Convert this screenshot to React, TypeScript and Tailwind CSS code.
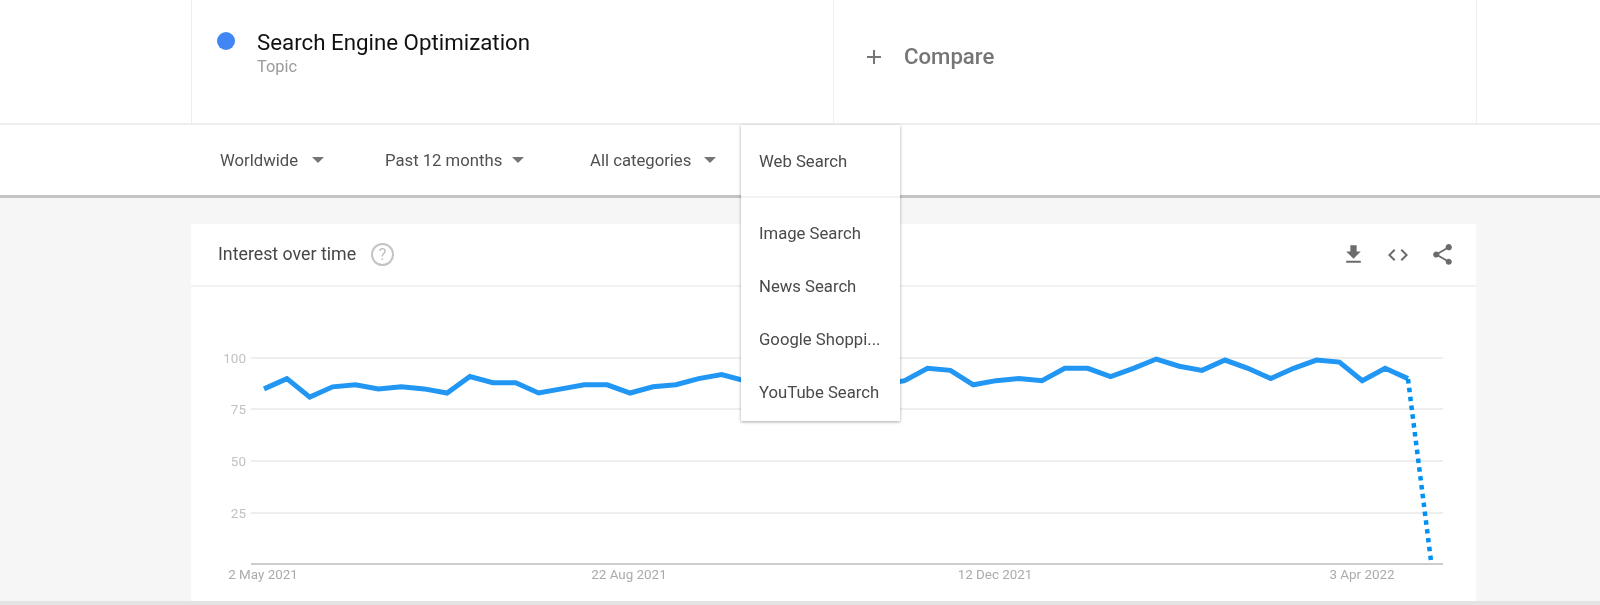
const values = [
  85, 90, 81, 86, 87, 85, 86, 85, 83, 91, 88, 88, 83, 85, 87, 87, 83, 86, 87, 90, 92, 89, 90, 88, 87, 88, 90, 87, 89, 95,
  94, 87, 89, 90, 89, 95, 95, 91, 95, 99.5, 96, 94, 99, 95, 90, 95, 99, 98, 89, 95, 90,
]

const X0 = 264
const STEP = 22.88
const toY = (v: number) => 564 - 2.06 * v
const solidLine = values.map((v, i) => `${X0 + i * STEP},${toY(v)}`).join(' ')

const gridLines = [
  { label: '100', y: 358 },
  { label: '75', y: 409 },
  { label: '50', y: 461 },
  { label: '25', y: 513 },
]

const dates = [
  { label: '2 May 2021', x: 263 },
  { label: '22 Aug 2021', x: 629 },
  { label: '12 Dec 2021', x: 995 },
  { label: '3 Apr 2022', x: 1362 },
]

function Caret({ className }: { className: string }) {
  return <span className={`h-0 w-0 border-x-[6px] border-t-[6px] border-x-transparent border-t-[#757575] ${className}`} />
}

function Filter({ label, className }: { label: string; className: string }) {
  return (
    <div className={`flex items-center ${className}`}>
      <span>{label}</span>
      <Caret className="mb-[2px]" />
    </div>
  )
}

function Chart() {
  return (
    <svg viewBox="191 287 1285 314" className="block h-[314px] w-[1285px]" style={{ fontFamily: 'Roboto, sans-serif' }}>
      {gridLines.map((g) => (
        <g key={g.label}>
          <line x1="251" x2="1443" y1={g.y} y2={g.y} stroke="#e8e8e8" strokeWidth="1.5" />
          <text x="246" y={g.y + 4.5} textAnchor="end" fontSize="13.5" fill="#c2c2c2">
            {g.label}
          </text>
        </g>
      ))}
      <line x1="251" x2="1443" y1="564" y2="564" stroke="#bdbdbd" strokeWidth="1.5" />
      {dates.map((d) => (
        <text key={d.label} x={d.x} y="579" textAnchor="middle" fontSize="13.4" fill="#ababab">
          {d.label}
        </text>
      ))}
      <polyline points={solidLine} fill="none" stroke="#2196f3" strokeWidth="5" />
      <line x1="1408" y1="379" x2="1431" y2="561" stroke="#0091f5" strokeWidth="4.5" strokeDasharray="4.5 4.4" />
    </svg>
  )
}

export default function App() {
  return (
    <div className="relative h-[605px] w-[1600px] overflow-hidden bg-[#f6f6f6] font-['Roboto',sans-serif] blur-[0.4px]">
      <div className="h-[125px] border-b-2 border-[#eeeeee] bg-white">
        <div className="ml-[191px] flex h-full w-[1286px] border-x border-[#eeeeee]">
          <div className="flex h-full w-[642px] border-r border-[#eeeeee] pl-[25px] pt-[28px]">
            <span className="mt-[4px] h-[18px] w-[18px] rounded-full bg-[#4285f4]" />
            <div className="ml-[22px]">
              <div className="text-[22.3px] leading-[28px] text-[#111111]">Search Engine Optimization</div>
              <div className="text-[16.4px] leading-[21px] text-[#9a9a9a]">Topic</div>
            </div>
          </div>
          <div className="flex items-center pb-[9px] pl-[28px] text-[#757575]">
            <svg viewBox="0 0 24 24" className="h-[24px] w-[24px]" fill="currentColor">
              <path d="M19 13h-6v6h-2v-6H5v-2h6V5h2v6h6v2z" />
            </svg>
            <span className="ml-[18px] text-[22.2px] font-medium">Compare</span>
          </div>
        </div>
      </div>

      <div className="relative h-[73px] border-b-[3px] border-[#c4c4c4] bg-white text-[16.7px] text-[#505050]">
        <div className="ml-[220px] flex h-full items-center pt-[2px]">
          <Filter label="Worldwide" className="w-[165px] gap-[14px]" />
          <Filter label="Past 12 months" className="w-[205px] gap-[10px]" />
          <Filter label="All categories" className="gap-[13px]" />
        </div>
        <div className="absolute left-[741px] top-0 z-10 w-[159px] bg-white text-[#4a4a4a] shadow-[0_1px_3px_rgba(0,0,0,0.35)]">
          <div className="flex h-[73px] items-center border-b-2 border-[#f2f2f2] pl-[18px] pt-[3px]">Web Search</div>
          <div className="flex flex-col pb-[2px] pt-[9px]">
            <div className="flex h-[53px] items-center pl-[18px]">Image Search</div>
            <div className="flex h-[53px] items-center pl-[18px]">News Search</div>
            <div className="flex h-[53px] items-center pl-[18px]">Google Shoppi...</div>
            <div className="flex h-[53px] items-center pl-[18px]">YouTube Search</div>
          </div>
        </div>
      </div>

      <div className="ml-[191px] mt-[26px] h-[377px] w-[1285px] bg-white">
        <div className="flex h-[63px] items-center border-b-2 border-[#f2f2f2] pl-[27px] pr-[21px]">
          <span className="text-[17.8px] text-[#474747]">Interest over time</span>
          <span className="ml-[15px] flex h-[23px] w-[23px] items-center justify-center rounded-full border-2 border-[#c4c4c4] text-[16px] leading-none text-[#bdbdbd]">
            ?
          </span>
          <div className="ml-auto flex items-center gap-[20px] text-[#6b6b6b]">
            <svg viewBox="0 0 24 24" className="h-[25px] w-[25px]" fill="currentColor">
              <path d="M19 9h-4V3H9v6H5l7 7 7-7zM5 18v2h14v-2H5z" />
            </svg>
            <svg viewBox="0 0 24 24" className="h-[24px] w-[24px]" fill="currentColor">
              <path d="M9.4 16.6L4.8 12l4.6-4.6L8 6l-6 6 6 6 1.4-1.4zm5.2 0l4.6-4.6-4.6-4.6L16 6l6 6-6 6-1.4-1.4z" />
            </svg>
            <svg viewBox="0 0 24 24" className="h-[25px] w-[25px]" fill="currentColor">
              <path d="M18 16.08c-.76 0-1.44.3-1.96.77L8.91 12.7c.05-.23.09-.46.09-.7s-.04-.47-.09-.7l7.05-4.11c.54.5 1.25.81 2.04.81 1.66 0 3-1.34 3-3s-1.34-3-3-3-3 1.34-3 3c0 .24.04.47.09.7L8.04 9.81C7.5 9.31 6.79 9 6 9c-1.66 0-3 1.34-3 3s1.34 3 3 3c.79 0 1.5-.31 2.04-.81l7.12 4.16c-.05.21-.08.43-.08.65 0 1.61 1.31 2.92 2.92 2.92 1.61 0 2.92-1.31 2.92-2.92s-1.31-2.92-2.92-2.92z" />
            </svg>
          </div>
        </div>
        <Chart />
      </div>

      <div className="h-[4px] bg-[#e4e4e4]" />
    </div>
  )
}
